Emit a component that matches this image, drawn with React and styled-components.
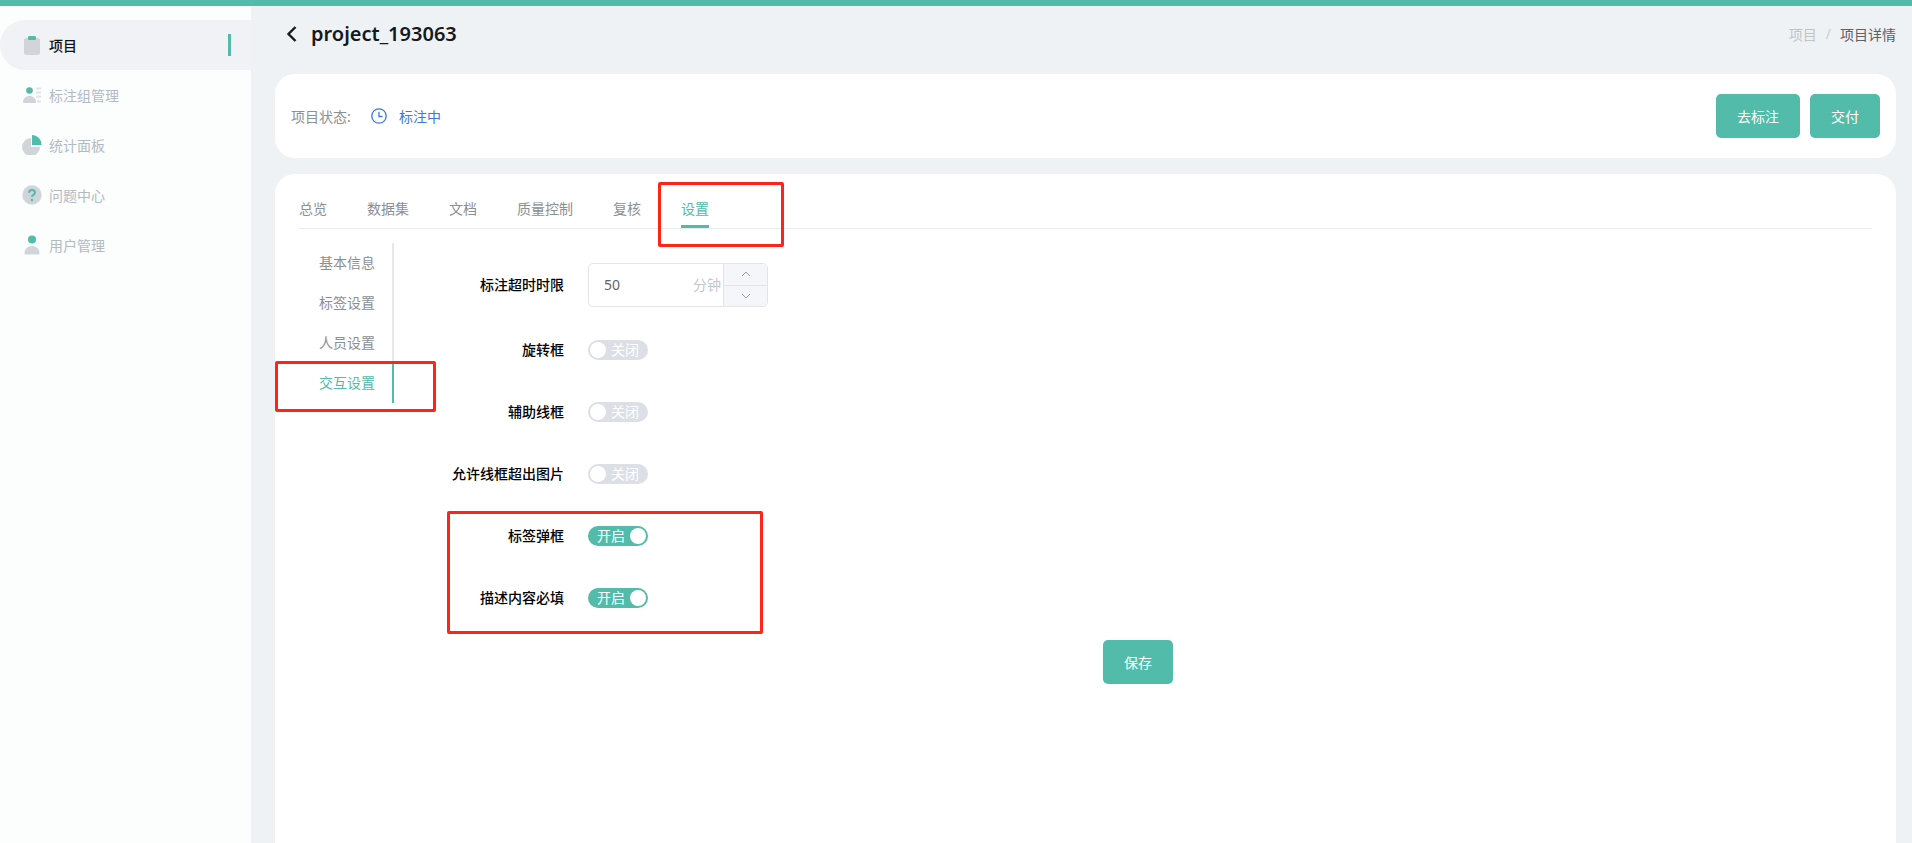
import React from "react";
import styled, { createGlobalStyle } from "styled-components";

const TEAL = "#52bba9";

const Global = createGlobalStyle`
  html, body { margin: 0; padding: 0; height: 100%; }
  body { font-family: "Noto Sans", "Noto Sans CJK SC", sans-serif; font-size: 14px; background: #eff2f5; overflow: hidden; }
  * { box-sizing: border-box; }
`;

const Page = styled.div`
  position: relative;
  height: 843px;
  display: flex;
  flex-direction: column;
  overflow: hidden;
`;
const TopBar = styled.div`
  height: 6px;
  flex: none;
  background: ${TEAL};
`;
const Body = styled.div`
  flex: 1;
  display: flex;
  min-height: 0;
`;
const Sidebar = styled.nav`
  width: 251px;
  flex: none;
  padding-top: 14px;
  background: #fcfdfd;
`;
const NavItem = styled.div`
  position: relative;
  height: 50px;
  display: flex;
  align-items: center;
  gap: 7px;
  padding-left: 22px;
  border-radius: 25px 0 0 25px;
  color: ${(p) => (p.$active ? "#111" : "#b3bac4")};
  font-weight: ${(p) => (p.$active ? 500 : 400)};
  background: ${(p) => (p.$active ? "#f0f2f6" : "transparent")};
  &::after {
    content: "";
    display: ${(p) => (p.$active ? "block" : "none")};
    position: absolute;
    left: 228px;
    top: 14px;
    width: 3px;
    height: 22px;
    background: ${TEAL};
  }
`;
const NavIcon = styled.svg`
  width: 20px;
  height: 20px;
  flex: none;
`;
const Main = styled.main`
  flex: 1;
  min-width: 0;
  padding: 0 16px 0 24px;
  display: flex;
  flex-direction: column;
`;
const Header = styled.header`
  height: 68px;
  flex: none;
  display: flex;
  align-items: center;
  justify-content: space-between;
  margin-right: 0;
  padding: 0 0 13px 10px;
`;
const TitleWrap = styled.div`
  display: flex;
  align-items: center;
  gap: 12px;
`;
const BackIcon = styled.svg`
  width: 14px;
  height: 18px;
`;
const Title = styled.h1`
  margin: 0;
  font-size: 20px;
  font-weight: 600;
  color: #16181c;
`;
const Crumbs = styled.div`
  display: flex;
  align-items: center;
  font-size: 14px;
  color: #bfc3ca;
`;
const CrumbSep = styled.span`
  margin: 0 9px;
  color: #c8ccd2;
`;
const CrumbCurrent = styled.span`
  color: #5c6068;
`;
const StatusCard = styled.section`
  height: 84px;
  flex: none;
  background: #fff;
  border-radius: 20px;
  display: flex;
  align-items: center;
  justify-content: space-between;
  padding: 0 16px;
`;
const StatusLeft = styled.div`
  display: flex;
  align-items: center;
`;
const StatusLabel = styled.span`
  color: #8b8f96;
  width: 80px;
`;
const StatusValue = styled.span`
  display: flex;
  align-items: center;
  gap: 12px;
  color: #3a7bd5;
`;
const Actions = styled.div`
  display: flex;
  gap: 10px;
`;
const Button = styled.button`
  height: 44px;
  width: ${(p) => p.$w}px;
  border: 0;
  border-radius: 5px;
  background: ${TEAL};
  color: #fff;
  font: inherit;
  font-size: 14px;
  padding: 0;
`;
const ContentCard = styled.section`
  flex: 1;
  margin-top: 16px;
  background: #fff;
  border-radius: 20px 20px 0 0;
  padding: 0 24px;
`;
const Tabs = styled.div`
  height: 55px;
  display: flex;
  gap: 40px;
  border-bottom: 1px solid #e8eaed;
`;
const Tab = styled.div`
  height: 54px;
  padding-top: 24px;
  line-height: 22px;
  color: ${(p) => (p.$active ? TEAL : "#8a8e95")};
  border-bottom: 3px solid ${(p) => (p.$active ? TEAL : "transparent")};
  margin-bottom: -1px;
`;
const Split = styled.div`
  display: flex;
  margin-top: 14px;
`;
const SubNav = styled.div`
  width: 95px;
  flex: none;
  height: 160px;
  border-right: 2px solid #e6e8eb;
`;
const SubItem = styled.div`
  position: relative;
  height: 40px;
  line-height: 40px;
  padding-left: 20px;
  color: ${(p) => (p.$active ? TEAL : "#8a8e95")};
  margin-right: -2px;
  border-right: 2px solid ${(p) => (p.$active ? TEAL : "transparent")};
`;
const FormArea = styled.div`
  flex: 1;
  padding-top: 20px;
`;
const Row = styled.div`
  display: flex;
  align-items: center;
  height: ${(p) => p.$h}px;
  margin-bottom: ${(p) => p.$mb}px;
`;
const Label = styled.label`
  width: 170px;
  text-align: right;
  margin-right: 24px;
  flex: none;
  color: #000;
  font-weight: 500;
  position: relative;
  top: -1px;
`;
const Stepper = styled.div`
  width: 180px;
  height: 44px;
  border: 1px solid #e2e4e8;
  border-radius: 5px;
  display: flex;
  overflow: hidden;
`;
const StepValue = styled.span`
  flex: 1;
  padding-left: 15px;
  line-height: 42px;
  color: #5f6369;
`;
const StepUnit = styled.span`
  line-height: 42px;
  padding-right: 2px;
  color: #c3c6cc;
`;
const StepBtns = styled.div`
  width: 44px;
  display: flex;
  flex-direction: column;
  border-left: 1px solid #e2e4e8;
  background: #f5f6fa;
`;
const StepBtn = styled.div`
  flex: 1;
  display: flex;
  align-items: center;
  justify-content: center;
  & + & { border-top: 1px solid #e2e4e8; }
`;
const Toggle = styled.div`
  width: 60px;
  height: 20px;
  border-radius: 10px;
  display: flex;
  align-items: center;
  justify-content: ${(p) => (p.$on ? "space-between" : "flex-start")};
  flex-direction: ${(p) => (p.$on ? "row" : "row")};
  background: ${(p) => (p.$on ? TEAL : "#dcdfe6")};
  color: #fff;
  font-size: 14px;
  padding: 0 2px 0 ${(p) => (p.$on ? "9px" : "2px")};
  line-height: 20px;
  gap: ${(p) => (p.$on ? "0" : "5px")};
`;
const Knob = styled.span`
  width: 16px;
  height: 16px;
  flex: none;
  border-radius: 50%;
  background: #fff;
`;
const Footer = styled.div`
  display: flex;
  justify-content: center;
  padding-left: 10px;
  margin-top: 21px;
`;
const Mark = styled.div`
  position: absolute;
  left: ${(p) => p.$x}px;
  top: ${(p) => p.$y}px;
  width: ${(p) => p.$w}px;
  height: ${(p) => p.$h}px;
  border: 3px solid #ff2318;
  border-radius: 2px;
  pointer-events: none;
`;

const GRAY = "#d1d5da";

const ClipIcon = () => (
  <NavIcon viewBox="0 0 20 20">
    <rect x="2" y="3" width="16" height="17" rx="2" fill={GRAY} />
    <rect x="6" y="1" width="8" height="4" rx="1" fill={TEAL} />
  </NavIcon>
);
const TeamIcon = () => (
  <NavIcon viewBox="0 0 20 20">
    <circle cx="7.5" cy="5.5" r="3.3" fill={TEAL} />
    <path d="M1 17c0-3.6 2.8-6 6.500-6s6.500 2.400 6.500 6c0 .6-.4 1-1 1H2c-.6 0-1-.4-1-1z" fill={GRAY} />
    <path d="M14 3.500h5M14 7.500h5M14 11.500h5M15 16.500h4" stroke="#e1e4e7" strokeWidth="1.800" />
  </NavIcon>
);
const PieIcon = () => (
  <NavIcon viewBox="0 0 20 20">
    <path d="M9 3v9h9a9 9 0 1 1-9-9z" fill={GRAY} />
    <path d="M10 0a9.500 9.500 0 0 1 9.500 10H10z" fill={TEAL} />
  </NavIcon>
);
const QuestionIcon = () => (
  <NavIcon viewBox="0 0 20 20">
    <circle cx="10" cy="10" r="9.700" fill={GRAY} />
    <path d="M7 7.800c0-1.800 1.300-2.900 3-2.900s3 1 3 2.600c0 2.300-3 2.300-3 4.300" fill="none" stroke={TEAL} strokeWidth="2" />
    <circle cx="10" cy="15" r="1.300" fill={TEAL} />
  </NavIcon>
);
const UserIcon = () => (
  <NavIcon viewBox="0 0 20 20">
    <circle cx="10" cy="4.500" r="4" fill={TEAL} />
    <path d="M2.500 18c0-4 3.200-7 7.500-7s7.500 3 7.500 7c0 1-.5 1.500-1 1.500H3.500c-.5 0-1-.5-1-1.500z" fill={GRAY} />
  </NavIcon>
);

const navItems = [
  ["项目", ClipIcon, true],
  ["标注组管理", TeamIcon],
  ["统计面板", PieIcon],
  ["问题中心", QuestionIcon],
  ["用户管理", UserIcon],
];
const tabs = ["总览", "数据集", "文档", "质量控制", "复核", "设置"];
const subs = ["基本信息", "标签设置", "人员设置", "交互设置"];
const toggles = [
  ["旋转框", false],
  ["辅助线框", false],
  ["允许线框超出图片", false],
  ["标签弹框", true],
  ["描述内容必填", true],
];

const Chevron = ({ up }) => (
  <svg width="10" height="6" viewBox="0 0 10 6">
    <path d={up ? "M1 5l4-4 4 4" : "M1 1l4 4 4-4"} fill="none" stroke="#9a9ea6" strokeWidth="1" />
  </svg>
);

export default function App() {
  return (
    <Page>
      <Global />
      <TopBar />
      <Body>
        <Sidebar>
          {navItems.map(([label, Icon, active]) => (
            <NavItem key={label} $active={active}>
              <Icon />
              {label}
            </NavItem>
          ))}
        </Sidebar>
        <Main>
          <Header>
            <TitleWrap>
              <BackIcon viewBox="0 0 14 18">
                <path d="M10.500 2L3.500 9l7 7" fill="none" stroke="#16181c" strokeWidth="2.400" />
              </BackIcon>
              <Title>project_193063</Title>
            </TitleWrap>
            <Crumbs>
              <span>项目</span>
              <CrumbSep>/</CrumbSep>
              <CrumbCurrent>项目详情</CrumbCurrent>
            </Crumbs>
          </Header>
          <StatusCard>
            <StatusLeft>
              <StatusLabel>项目状态:</StatusLabel>
              <StatusValue>
                <svg width="16" height="16" viewBox="0 0 16 16">
                  <circle cx="8" cy="8" r="7.200" fill="none" stroke="#3a7bd5" strokeWidth="1.300" />
                  <path d="M8 3.800V8.500h3.500" fill="none" stroke="#3a7bd5" strokeWidth="1.300" />
                </svg>
                标注中
              </StatusValue>
            </StatusLeft>
            <Actions>
              <Button $w={84}>去标注</Button>
              <Button $w={70}>交付</Button>
            </Actions>
          </StatusCard>
          <ContentCard>
            <Tabs>
              {tabs.map((t) => (
                <Tab key={t} $active={t === "设置"}>{t}</Tab>
              ))}
            </Tabs>
            <Split>
              <SubNav>
                {subs.map((s) => (
                  <SubItem key={s} $active={s === "交互设置"}>{s}</SubItem>
                ))}
              </SubNav>
              <FormArea>
                <Row $h={44} $mb={23}>
                  <Label>标注超时时限</Label>
                  <Stepper>
                    <StepValue>50</StepValue>
                    <StepUnit>分钟</StepUnit>
                    <StepBtns>
                      <StepBtn><Chevron up /></StepBtn>
                      <StepBtn><Chevron /></StepBtn>
                    </StepBtns>
                  </Stepper>
                </Row>
                {toggles.map(([label, on]) => (
                  <Row key={label} $h={40} $mb={22}>
                    <Label>{label}</Label>
                    <Toggle $on={on}>
                      {on ? <>开启<Knob /></> : <><Knob />关闭</>}
                    </Toggle>
                  </Row>
                ))}
                <Footer>
                  <Button $w={70}>保存</Button>
                </Footer>
              </FormArea>
            </Split>
          </ContentCard>
        </Main>
      </Body>
      <Mark $x={658} $y={182} $w={126} $h={65} />
      <Mark $x={275} $y={361} $w={161} $h={51} />
      <Mark $x={447} $y={511} $w={316} $h={123} />
    </Page>
  );
}
